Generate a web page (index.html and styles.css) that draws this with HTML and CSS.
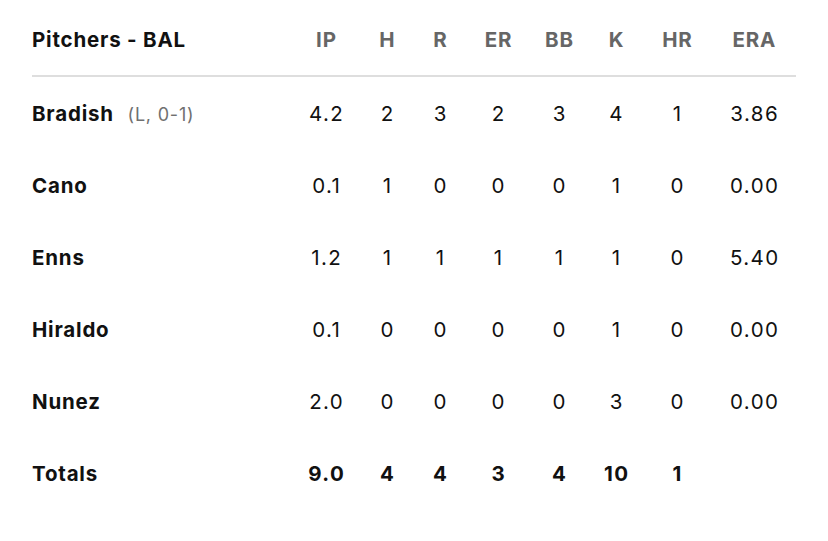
FILE: index.html
```html
<!DOCTYPE html>
<html>
<head>
<meta charset="utf-8">
<link rel="stylesheet" href="styles.css">
</head>
<body>
<div class="box">
  <div class="row head">
    <div class="name">Pitchers - BAL</div>
    <div class="c">IP</div><div class="c">H</div><div class="c">R</div><div class="c">ER</div><div class="c">BB</div><div class="c">K</div><div class="c">HR</div><div class="c era">ERA</div>
  </div>
  <div class="row">
    <div class="name">Bradish <span class="rec">(L, 0-1)</span></div>
    <div class="c">4.2</div><div class="c">2</div><div class="c">3</div><div class="c">2</div><div class="c">3</div><div class="c">4</div><div class="c">1</div><div class="c era">3.86</div>
  </div>
  <div class="row">
    <div class="name">Cano</div>
    <div class="c">0.1</div><div class="c">1</div><div class="c">0</div><div class="c">0</div><div class="c">0</div><div class="c">1</div><div class="c">0</div><div class="c era">0.00</div>
  </div>
  <div class="row">
    <div class="name">Enns</div>
    <div class="c">1.2</div><div class="c">1</div><div class="c">1</div><div class="c">1</div><div class="c">1</div><div class="c">1</div><div class="c">0</div><div class="c era">5.40</div>
  </div>
  <div class="row">
    <div class="name">Hiraldo</div>
    <div class="c">0.1</div><div class="c">0</div><div class="c">0</div><div class="c">0</div><div class="c">0</div><div class="c">1</div><div class="c">0</div><div class="c era">0.00</div>
  </div>
  <div class="row">
    <div class="name">Nunez</div>
    <div class="c">2.0</div><div class="c">0</div><div class="c">0</div><div class="c">0</div><div class="c">0</div><div class="c">3</div><div class="c">0</div><div class="c era">0.00</div>
  </div>
  <div class="row total">
    <div class="name">Totals</div>
    <div class="c">9.0</div><div class="c">4</div><div class="c">4</div><div class="c">3</div><div class="c">4</div><div class="c">10</div><div class="c">1</div><div class="c era"></div>
  </div>
</div>
</body>
</html>
```
FILE: styles.css
```css
html, body {
  margin: 0;
  padding: 0;
  background: #fff;
}
body {
  font-family: "Inter", "Lato", sans-serif;
  color: #111;
  font-size: 20.5px;
  letter-spacing: 0.8px;
}
.box {
  width: 764px;
  margin-left: 32px;
  padding-top: 4px;
}
.row {
  display: grid;
  grid-template-columns: 264px 60px 62px 44px 72px 50px 64px 58px 90px;
  align-items: center;
  height: 72px;
}
.head {
  height: 71px;
  border-bottom: 2px solid #dedede;
  font-weight: 700;
  color: #666;
}
.head .name {
  color: #111;
}
.name {
  font-weight: 700;
  white-space: nowrap;
}
.c {
  text-align: center;
  letter-spacing: 1.4px;
  text-indent: 1.4px;
}
.head .c {
  letter-spacing: 0.8px;
  text-indent: 0.8px;
}
.era {
  padding-left: 6px;
}
.rec {
  font-weight: 400;
  font-size: 18px;
  color: #707070;
  margin-left: 8px;
}
.row:not(.head) {
  padding-top: 1px;
  box-sizing: border-box;
}
.total .c {
  font-weight: 700;
}
```
